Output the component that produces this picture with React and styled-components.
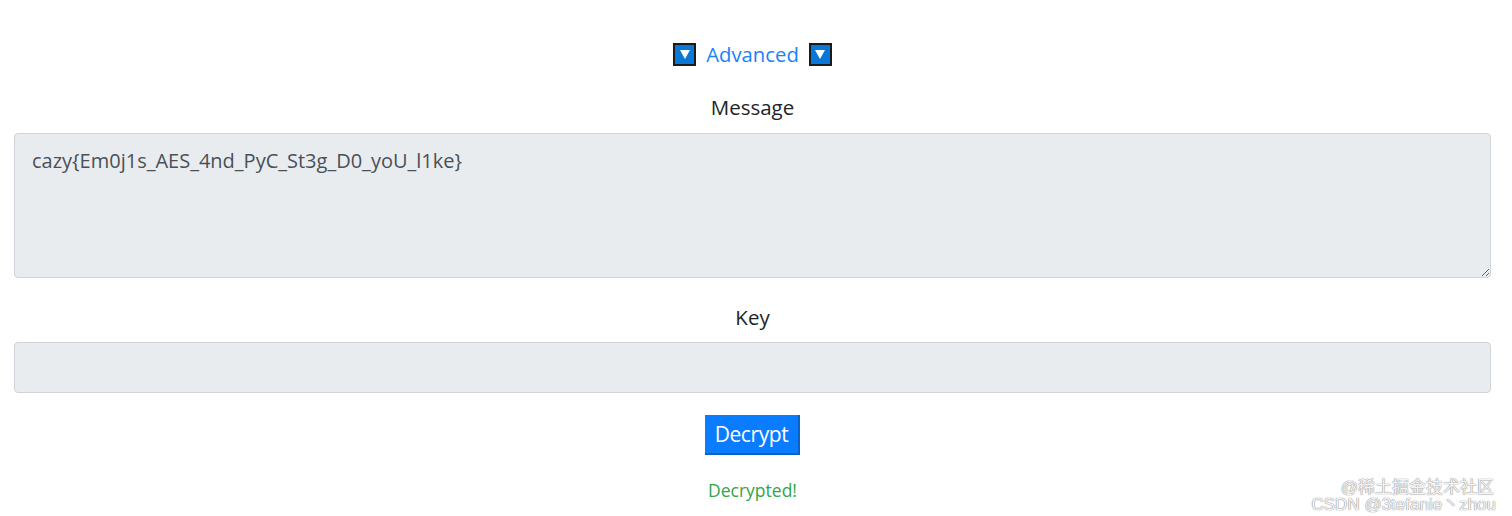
import React from 'react';
import styled, { createGlobalStyle } from 'styled-components';

const GlobalStyle = createGlobalStyle`
  body {
    margin: 0;
    background: #fff;
    font-family: "Open Sans", "Noto Sans", sans-serif;
    color: #212529;
  }
`;

const Page = styled.div`
  position: relative;
  height: 516px;
  padding: 0 21px 0 14px;
  display: flex;
  flex-direction: column;
  align-items: center;
  overflow: hidden;
`;

const AdvancedRow = styled.div`
  margin-top: 41px;
  height: 26px;
  display: flex;
  align-items: center;
  gap: 10px;
`;

const Arrow = styled.span`
  width: 23px;
  height: 23px;
  box-sizing: border-box;
  background: #0a78d7;
  border: 2px solid #1b1b1b;
  display: flex;
  align-items: center;
  justify-content: center;

  &::after {
    content: '';
    border-left: 5px solid transparent;
    border-right: 5px solid transparent;
    border-top: 9px solid #fff;
    margin-top: 1px;
  }
`;

const AdvancedLink = styled.a`
  color: #1a82f7;
  font-size: 20.3px;
  text-decoration: none;
  line-height: 26px;
`;

const Label = styled.div`
  font-size: 20.5px;
  line-height: 26px;
  margin-top: ${({ $top }) => $top}px;
`;

const Field = styled.div`
  align-self: stretch;
  box-sizing: border-box;
  background: #e9ecef;
  border: 1px solid #ced4da;
  border-radius: 4px;
  height: ${({ $h }) => $h}px;
  margin-top: ${({ $top }) => $top}px;
  position: relative;
`;

const MessageText = styled.textarea`
  width: 100%;
  height: 100%;
  box-sizing: border-box;
  border: none;
  background: transparent;
  resize: both;
  padding: 13px 17px;
  font-family: "Open Sans", "Noto Sans", sans-serif;
  font-size: 20px;
  line-height: 27px;
  color: #495057;
  outline: none;
`;

const Button = styled.button`
  margin-top: 22px;
  width: 95px;
  height: 40px;
  background: #0a7cff;
  color: #fff;
  border: none;
  border-right: 2px solid #0a63c4;
  border-bottom: 2px solid #0a63c4;
  font-family: "Open Sans", "Noto Sans", sans-serif;
  font-size: 21px;
  letter-spacing: -0.4px;
  padding: 0;
  line-height: 36px;
`;

const Status = styled.div`
  margin-top: 23px;
  color: #2fa64a;
  font-size: 17.5px;
`;

const Watermark = styled.div`
  position: absolute;
  right: 16px;
  bottom: 3px;
  text-align: right;
  color: #f4f4f4;
  text-shadow: 0 0 1px #888, 0 0 1px #888;
  font-family: "Liberation Sans", "Noto Sans CJK SC", sans-serif;
  font-size: 17px;
  line-height: 17px;
`;

const WatermarkLine = styled.div`
  padding-right: ${({ $pr }) => $pr}px;
`;

const App = () => {
  return (
    <>
      <GlobalStyle />
      <Page>
        <AdvancedRow>
          <Arrow />
          <AdvancedLink href="#">Advanced</AdvancedLink>
          <Arrow />
        </AdvancedRow>
        <Label $top={27}>Message</Label>
        <Field $h={145} $top={13}>
          <MessageText defaultValue="cazy{Em0j1s_AES_4nd_PyC_St3g_D0_yoU_l1ke}" />
        </Field>
        <Label $top={26}>Key</Label>
        <Field $h={51} $top={12} />
        <Button>Decrypt</Button>
        <Status>Decrypted!</Status>
        <Watermark>
          <WatermarkLine $pr={2}>@稀土掘金技术社区</WatermarkLine>
          <WatermarkLine $pr={0}>CSDN @3tefanie丶zhou</WatermarkLine>
        </Watermark>
      </Page>
    </>
  );
};

export default App;
